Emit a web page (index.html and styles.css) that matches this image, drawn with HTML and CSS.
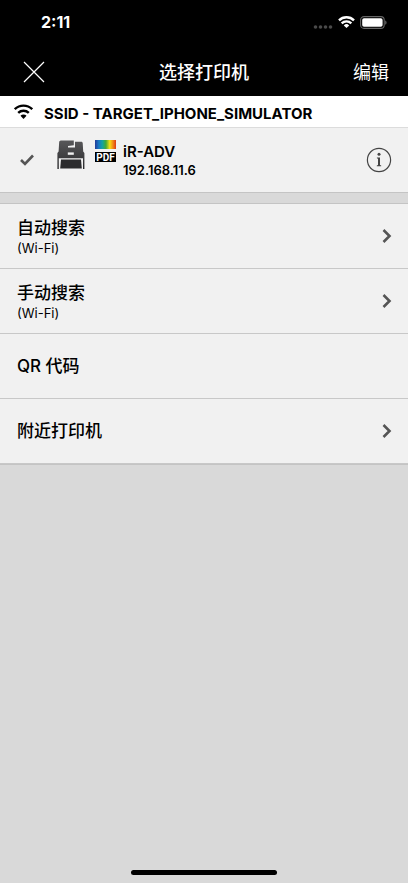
FILE: index.html
```html
<!DOCTYPE html>
<html lang="zh-CN">
<head>
<meta charset="utf-8">
<meta name="viewport" content="width=device-width, initial-scale=1">
<title>选择打印机</title>
<link rel="stylesheet" href="styles.css">
</head>
<body>
<header class="top">
  <div class="status">
    <span class="time">2:11</span>
    <div class="status-icons">
      <svg width="20" height="4" viewBox="0 0 20 4" fill="#4a4a4a" aria-hidden="true"><circle cx="2.5" cy="2" r="1.8"/><circle cx="7.5" cy="2" r="1.8"/><circle cx="12.5" cy="2" r="1.8"/><circle cx="17.5" cy="2" r="1.8"/></svg>
      <svg class="status-wifi" width="17" height="12" viewBox="0 0 17 12" aria-hidden="true"><g fill="none" stroke="#fff" stroke-width="2.4"><path d="M1 4.4a10.6 10.6 0 0 1 15 0"/><path d="M3.7 7.4a6.8 6.8 0 0 1 9.6 0"/></g><path fill="#fff" d="M5.8 9.4a3.8 3.8 0 0 1 5.4 0L8.5 12z"/></svg>
      <svg width="27" height="13" viewBox="0 0 27 13" aria-hidden="true"><rect x=".6" y=".6" width="23.6" height="11.8" rx="3.4" fill="none" stroke="#666" stroke-width="1.1"/><rect x="2.2" y="2.2" width="20.4" height="8.6" rx="1.8" fill="#fff"/><path d="M25.2 4.4c1.8.5 1.8 3.7 0 4.2z" fill="#666"/></svg>
    </div>
  </div>
  <nav class="nav">
    <button class="close" type="button" aria-label="关闭">
      <svg width="22" height="22" viewBox="0 0 22 22" fill="none" stroke="#fff" stroke-width="1.2" aria-hidden="true"><path d="M1 1l20 20M21 1L1 21"/></svg>
    </button>
    <h1 class="title">选择打印机</h1>
    <button class="edit" type="button">编辑</button>
  </nav>
</header>
<main>
  <div class="ssid">
    <svg width="19" height="15" viewBox="0 0 19 15" aria-hidden="true"><g fill="none" stroke="#000" stroke-width="2.4"><path d="M.8 5.2a12.4 12.4 0 0 1 17.4 0"/><path d="M4.2 8.9a7.6 7.6 0 0 1 10.6 0"/></g><path d="M6.5 11.8a4.1 4.1 0 0 1 6 0l-3 3.2z"/></svg>
    <span>SSID - TARGET_IPHONE_SIMULATOR</span>
  </div>
  <section class="printer">
    <svg class="check" width="14" height="12" viewBox="0 0 14 12" fill="none" stroke="#555" stroke-width="2.6" aria-hidden="true"><path d="M1 6l4 4 8-8.5"/></svg>
    <svg class="device" width="28" height="30" viewBox="0 0 28 30" aria-hidden="true">
      <defs><linearGradient id="body" x2="0" y2="1"><stop stop-color="#58585a"/><stop offset="1" stop-color="#2a2a2c"/></linearGradient></defs>
      <path fill="url(#body)" d="M2.2 1.4L3.6.4h13.2v4.8l-5.8.9v1.3h7V1.8h6.8l.9 1 .5 8.8 1.2 1.4v16h-1.4V18.2H1.8V29H.4V13l1.2-1.4z"/>
      <path fill="#f1f1f1" d="M10.8 12.4h6v2.4h-6z"/>
      <path fill="#2c2c2e" d="M4 19.4h20l.8 9.2H3.2z"/>
    </svg>
    <svg class="formats" width="21" height="22" viewBox="0 0 21 22" role="img" aria-label="彩色 PDF">
      <defs><linearGradient id="rainbow"><stop stop-color="#243a97"/><stop offset=".18" stop-color="#1878c4"/><stop offset=".35" stop-color="#13a3a0"/><stop offset=".52" stop-color="#43aa35"/><stop offset=".7" stop-color="#f4df16"/><stop offset=".85" stop-color="#f28b16"/><stop offset="1" stop-color="#dc3818"/></linearGradient></defs>
      <rect width="21" height="9" fill="url(#rainbow)"/>
      <rect y="12" width="21" height="10"/>
      <text class="pdf" x="10.5" y="21" text-anchor="middle">PDF</text>
    </svg>
    <div class="details">
      <h2 class="name">iR-ADV</h2>
      <p class="address">192.168.11.6</p>
    </div>
    <button class="info" type="button" aria-label="打印机信息">
      <svg width="26" height="26" viewBox="0 0 26 26" aria-hidden="true"><circle cx="13" cy="13" r="11.6" fill="none" stroke="#444" stroke-width="1.2"/><circle cx="13" cy="7.3" r="1.5" fill="#444"/><path fill="#444" d="M10.9 10.6h3.1v7.5l1.2.4v.7h-4.4v-.7l1.2-.4v-6.4l-1.1-.4z"/></svg>
    </button>
  </section>
  <ul class="menu">
    <li><a class="row" href="#auto"><span><b class="label">自动搜索</b><small class="sub">(Wi-Fi)</small></span><svg class="chevron" width="10" height="14" viewBox="0 0 10 14" aria-hidden="true"><path d="M1.5 1l6 6-6 6"/></svg></a></li>
    <li><a class="row" href="#manual"><span><b class="label">手动搜索</b><small class="sub">(Wi-Fi)</small></span><svg class="chevron" width="10" height="14" viewBox="0 0 10 14" aria-hidden="true"><path d="M1.5 1l6 6-6 6"/></svg></a></li>
    <li><a class="row" href="#qr"><b class="label">QR 代码</b></a></li>
    <li><a class="row" href="#nearby"><b class="label">附近打印机</b><svg class="chevron" width="10" height="14" viewBox="0 0 10 14" aria-hidden="true"><path d="M1.5 1l6 6-6 6"/></svg></a></li>
  </ul>
</main>
<div class="home-bar"></div>
</body>
</html>
```
FILE: styles.css
```css
* {
  box-sizing: border-box;
}

body {
  margin: 0;
  min-height: 100vh;
  display: flex;
  flex-direction: column;
  background: #d9d9d9;
  color: #000;
  font-family: Inter, "Noto Sans CJK SC", sans-serif;
}

button {
  margin: 0;
  padding: 0;
  border: 0;
  background: none;
  color: inherit;
  font: inherit;
}

svg {
  display: block;
  flex: none;
}

h1, h2, p, ul {
  margin: 0;
  padding: 0;
}

.top {
  background: #000;
  color: #fff;
}

.status {
  height: 48px;
  padding: 0 21px 4px 41px;
  display: flex;
  align-items: center;
  justify-content: space-between;
}

.time {
  font-size: 16px;
  font-weight: 700;
}

.status-icons {
  display: flex;
  align-items: center;
  gap: 5px;
}

.status-icons svg:first-child {
  align-self: flex-end;
}

.nav {
  height: 48px;
  padding: 0 19px;
  display: grid;
  grid-template-columns: 1fr auto 1fr;
  align-items: center;
}

.close {
  justify-self: start;
  padding: 4px;
}

.title {
  padding-top: 2px;
  font-size: 18px;
  line-height: 24px;
  font-weight: 500;
}

.edit {
  justify-self: end;
  padding-top: 2px;
  font-size: 18px;
  line-height: 24px;
}

.ssid {
  height: 32px;
  padding: 3px 14px 0;
  display: flex;
  align-items: center;
  gap: 11px;
  background: #fff;
  border-bottom: 1px solid #dcdcdc;
  font-size: 15px;
  font-weight: 700;
}

.ssid svg {
  margin-bottom: 4px;
}

.printer {
  height: 65px;
  padding: 0 16px 0 20px;
  display: flex;
  align-items: center;
  background: #f1f1f1;
  border-bottom: 1px solid #c4c4c4;
}

.device {
  margin: 0 10px 10px 23px;
}

.formats {
  margin: 0 7px 18px 0;
}

.pdf {
  fill: #fff;
  font: bold 10px Roboto, sans-serif;
}

.details {
  flex: 1;
}

.name {
  font-size: 15px;
  line-height: 20px;
  font-weight: 600;
}

.address {
  font-size: 13px;
  line-height: 16px;
  font-weight: 600;
}

.menu {
  margin-top: 10px;
  list-style: none;
  border-top: 1px solid #c4c4c4;
  border-bottom: 1px solid #c4c4c4;
}

.row {
  height: 65px;
  padding: 0 16px 0 17px;
  display: flex;
  align-items: center;
  justify-content: space-between;
  background: #f1f1f1;
  border-bottom: 1px solid #c8c8c8;
  color: inherit;
  text-decoration: none;
}

.label {
  display: block;
  font-size: 17px;
  line-height: 24px;
  font-weight: 500;
}

.sub {
  display: block;
  font-size: 13px;
  line-height: 16px;
}

.chevron {
  fill: none;
  stroke: #555;
  stroke-width: 2.6;
}

.home-bar {
  width: 36%;
  height: 5px;
  margin: auto auto 8px;
  border-radius: 3px;
  background: #000;
}
```
